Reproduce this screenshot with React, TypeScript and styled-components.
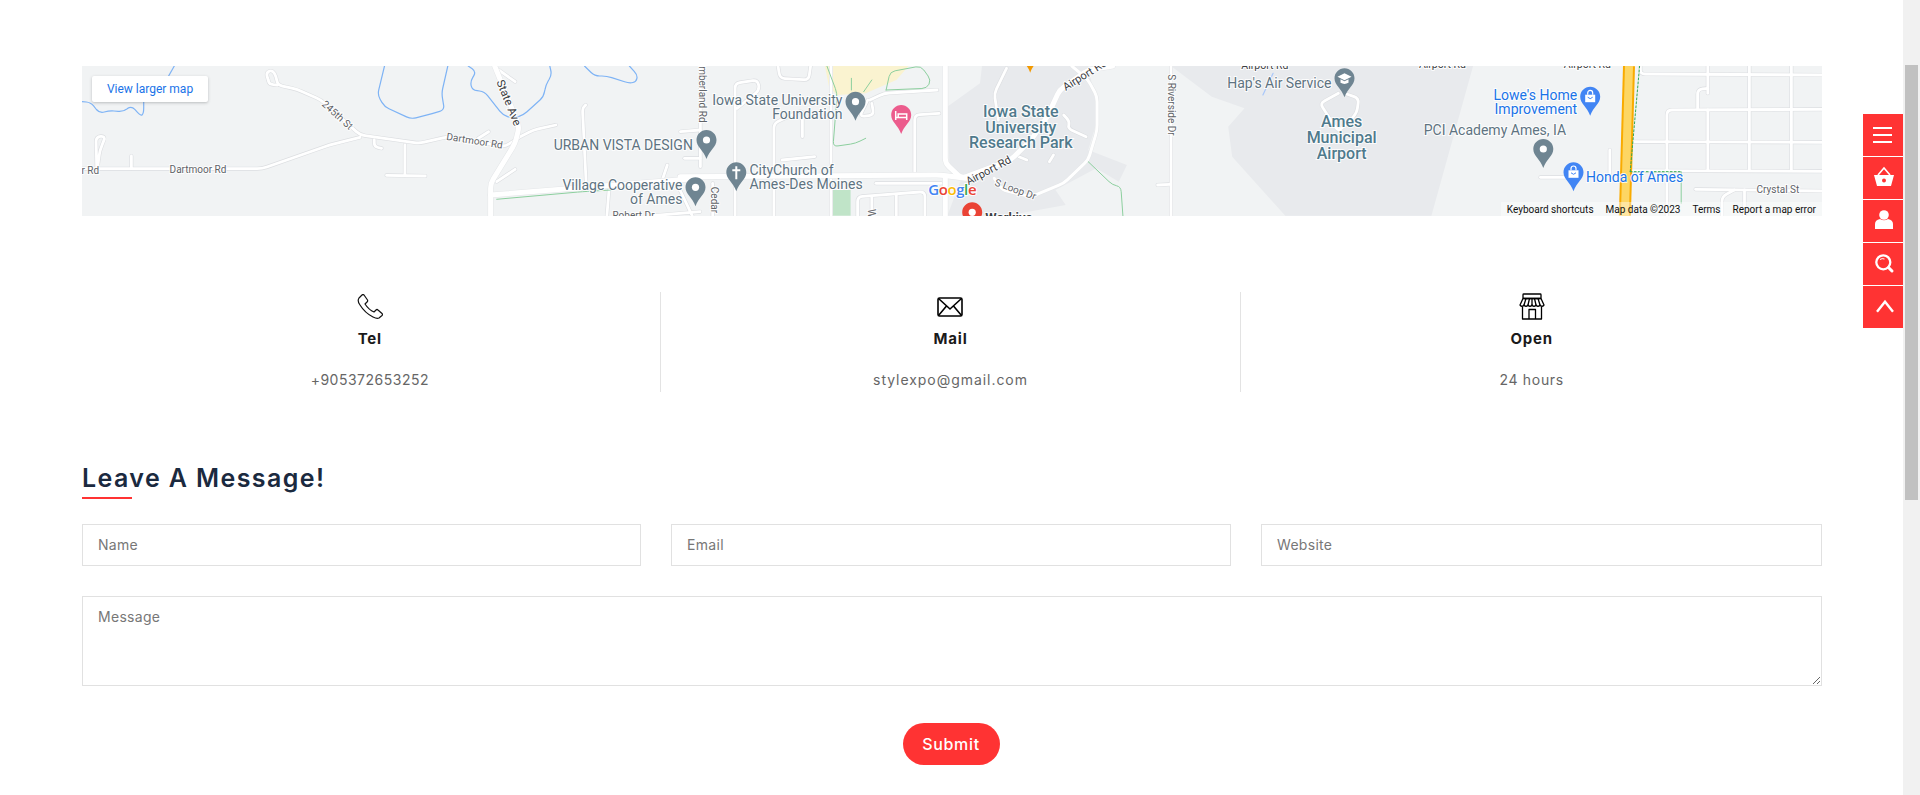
import React from "react";
import styled, { createGlobalStyle } from "styled-components";

const GlobalStyle = createGlobalStyle`
  html, body { margin: 0; padding: 0; height: 795px; overflow: hidden; background: #fff; }
  * { box-sizing: border-box; }
  body { font-family: Inter, "Liberation Sans", sans-serif; }
`;

const RED = "#ff3333";

const Shell = styled.div`
  position: relative;
  display: flex;
  width: 100%;
  height: 795px;
`;
const Page = styled.main`
  flex: 1;
  min-width: 0;
  padding: 66px 81px 0 82px;
`;
const ScrollTrack = styled.div`
  width: 17px;
  background: #f1f1f1;
  padding: 65px 2px 0;
`;
const ScrollThumb = styled.div`
  height: 435px;
  background: #c1c1c1;
`;

const SideMenu = styled.nav`
  position: absolute;
  top: 114px;
  right: 17px;
  display: flex;
  flex-direction: column;
  gap: 1px;
`;
const SideTile = styled.a`
  display: block;
  width: 40px;
  height: 42px;
  background: ${RED};
  svg { display: block; }
`;

const MapFrame = styled.section`
  position: relative;
  height: 150px;
  overflow: hidden;
  background: #f1f3f4;
  font-family: Roboto, sans-serif;
`;
const MapArt = styled.svg`
  display: block;
`;
const LargerMap = styled.a`
  position: absolute;
  top: 10px;
  left: 10px;
  width: 116px;
  height: 26px;
  display: flex;
  align-items: center;
  justify-content: center;
  background: #fff;
  border-radius: 2px;
  box-shadow: 0 1px 3px rgba(60, 64, 67, 0.3);
  color: #1a73e8;
  font-size: 12px;
`;
const Attribution = styled.div`
  position: absolute;
  right: 0;
  bottom: 0;
  display: flex;
  height: 14px;
  align-items: center;
  background: rgba(255, 255, 255, 0.4);
  color: #111;
  font-size: 10px;
  white-space: nowrap;
`;
const AttributionItem = styled.span`
  padding: 0 6px;
`;
const Tag = styled.text<{ $tone: string; $size: number; $weight: number }>`
  font-family: Roboto, sans-serif;
  font-size: ${(p) => p.$size}px;
  font-weight: ${(p) => p.$weight};
  fill: ${(p) => p.$tone};
  stroke: rgba(255, 255, 255, 0.85);
  stroke-width: 2px;
  paint-order: stroke;
  dominant-baseline: central;
`;
const GoogleMark = styled.text`
  font-family: "Open Sans", sans-serif;
  font-size: 15px;
  font-weight: 600;
  letter-spacing: -0.4px;
  stroke: rgba(255, 255, 255, 0.9);
  stroke-width: 2px;
  paint-order: stroke;
  dominant-baseline: central;
`;

const Contacts = styled.section`
  display: grid;
  grid-template-columns: repeat(3, 1fr);
  margin: 76px 0 0 -2px;
  height: 99px;
`;
const ContactItem = styled.div<{ $divider?: boolean }>`
  display: flex;
  flex-direction: column;
  align-items: center;
  border-right: ${(p) => (p.$divider ? "1px solid #e3e3e3" : "none")};
`;
const ContactIcon = styled.div`
  height: 29px;
  display: flex;
  align-items: center;
  justify-content: center;
  svg { display: block; }
`;
const ContactLabel = styled.h4`
  margin: 7px 0 0;
  font-size: 15px;
  line-height: 22px;
  font-weight: 700;
  color: #1a1a1a;
  letter-spacing: 0.8px;
`;
const ContactValue = styled.p<{ $spacing: number }>`
  margin: 18px 0 0;
  font-size: 14px;
  line-height: 24px;
  color: #666;
  letter-spacing: ${(p) => p.$spacing}px;
`;

const Heading = styled.h2`
  margin: 69px 0 0;
  font-size: 25px;
  line-height: 36px;
  font-weight: 600;
  color: #1b2a3f;
  letter-spacing: 1.4px;
`;
const HeadingBar = styled.div`
  width: 50px;
  height: 2px;
  margin-top: 1px;
  background: ${RED};
`;
const Form = styled.form`
  margin-top: 25px;
  display: flex;
  flex-direction: column;
  gap: 30px;
`;
const FieldRow = styled.div`
  display: grid;
  grid-template-columns: 559px 560px 1fr;
  gap: 30px;
`;
const Field = styled.input`
  height: 42px;
  width: 100%;
  padding: 0 15px 2px;
  border: 1px solid #e1e1e1;
  border-radius: 0;
  outline: none;
  background: #fff;
  font: 400 14px/20px Inter, sans-serif;
  letter-spacing: 0.3px;
  &::placeholder { color: #777; opacity: 1; }
`;
const MessageBox = styled.textarea`
  display: block;
  height: 90px;
  width: 100%;
  padding: 10px 15px;
  border: 1px solid #e1e1e1;
  border-radius: 0;
  outline: none;
  background: #fff;
  font: 400 14px/20px Inter, sans-serif;
  letter-spacing: 0.3px;
  &::placeholder { color: #777; opacity: 1; }
`;
const SubmitRow = styled.div`
  display: flex;
  justify-content: center;
  margin-top: 7px;
  padding-right: 2px;
`;
const Submit = styled.button`
  width: 97px;
  height: 42px;
  border: none;
  border-radius: 21px;
  background: ${RED};
  color: #fff;
  font: 500 16px/20px Inter, sans-serif;
  letter-spacing: 0.7px;
`;

/* ---------- map drawing: points are noted per strip of the sheet ---------- */
type Pt = [number, number];
const A = -22;
const B = 598;
const C = 1138;
const X = (off: number, zx: number) => off + zx / 2.45;
const Y = (zy: number) => zy / 3 - 16;

const curve = (off: number, pts: Pt[]) => {
  const p = pts.map(([x, y]) => [X(off, x), Y(y)]);
  const f = (n: number) => n.toFixed(1);
  let d = `M${f(p[0][0])} ${f(p[0][1])}`;
  for (let i = 1; i < p.length - 1; i++) {
    const [px, py] = p[i - 1];
    const [cx, cy] = p[i];
    const [nx, ny] = p[i + 1];
    const la = Math.hypot(cx - px, cy - py) || 1;
    const lb = Math.hypot(nx - cx, ny - cy) || 1;
    const ra = Math.min(5, la / 2);
    const rb = Math.min(5, lb / 2);
    d += ` L${f(cx - ((cx - px) / la) * ra)} ${f(cy - ((cy - py) / la) * ra)}`;
    d += ` Q${f(cx)} ${f(cy)} ${f(cx + ((nx - cx) / lb) * rb)} ${f(cy + ((ny - cy) / lb) * rb)}`;
  }
  const l = p[p.length - 1];
  return d + ` L${f(l[0])} ${f(l[1])}`;
};
const poly = (off: number, pts: Pt[]) =>
  pts.map(([x, y]) => `${X(off, x).toFixed(1)},${Y(y).toFixed(1)}`).join(" ");

const minorRoads: [number, Pt[]][] = [
  [A, [[510, 90], [505, 68], [520, 60], [530, 80], [533, 105], [580, 118], [640, 150], [735, 255], [880, 280], [950, 260], [1090, 290], [1125, 262]]],
  [A, [[533, 105], [513, 103], [510, 90]]],
  [A, [[54, 356], [495, 356], [660, 285], [735, 262]]],
  [A, [[845, 285], [845, 376]]],
  [A, [[800, 376], [895, 378]]],
  [A, [[175, 318], [175, 355]]],
  [A, [[90, 350], [88, 260], [112, 258], [98, 300], [92, 350]]],
  [A, [[1125, 262], [1160, 240], [1215, 225]]],
  [A, [[1115, 358], [1070, 395]]],
  [A, [[1075, 60], [1115, 95]]],
  [A, [[1050, 245], [1025, 265]]],
  [A, [[770, 270], [770, 290], [788, 295]]],
  [A, [[1288, 165], [1280, 175], [1290, 420]]],
  [A, [[1488, 345], [1470, 410]]],
  [A, [[1345, 420], [1340, 497]]],
  [A, [[1520, 245], [1568, 240]]],
  [A, [[1530, 325], [1568, 325]]],
  [A, [[1450, 497], [1568, 485]]],
  [B, [[135, 497], [135, 100], [190, 90], [195, 120], [140, 175]]],
  [B, [[230, 497], [230, 220], [300, 180], [300, 260]]],
  [B, [[240, 48], [245, 85], [315, 90], [320, 48]]],
  [B, [[575, 365], [575, 195], [635, 190]]],
  [B, [[370, 497], [370, 48]]],
  [B, [[465, 150], [500, 130], [630, 120]]],
  [B, [[460, 150], [440, 200], [475, 195], [470, 160]]],
  [B, [[435, 497], [435, 440], [600, 425], [600, 497]]],
  [B, [[470, 440], [470, 497]]],
  [B, [[530, 435], [530, 497]]],
  [B, [[480, 400], [640, 400]]],
  [B, [[50, 48], [50, 350]]],
  [B, [[0, 420], [30, 497]]],
  [B, [[250, 330], [330, 320]]],
  [B, [[80, 400], [80, 497]]],
  [B, [[1203, 48], [1203, 497]]],
  [B, [[1170, 405], [1200, 403]]],
  [B, [[800, 55], [770, 130], [780, 210]]],
  [B, [[940, 195], [955, 215], [950, 235], [995, 260]]],
  [B, [[905, 335], [915, 315]]],
  [B, [[830, 320], [850, 330]]],
  [C, [[290, 130], [245, 160], [290, 245], [335, 190], [340, 145], [305, 130]]],
  [C, [[1030, 48], [1030, 72], [1475, 75]]],
  [C, [[1095, 360], [1095, 180], [1475, 178]]],
  [C, [[1195, 48], [1195, 130]]],
  [C, [[1195, 180], [1195, 360]]],
  [C, [[1297, 48], [1297, 360]]],
  [C, [[1400, 48], [1400, 360]]],
  [C, [[1015, 275], [1475, 277]]],
  [C, [[1005, 362], [1475, 364]]],
  [C, [[1170, 175], [1170, 118], [1195, 115]]],
  [C, [[1165, 418], [1475, 423]]],
  [C, [[1230, 497], [1230, 440], [1260, 420]]],
  [C, [[1285, 497], [1285, 420]]],
  [C, [[1095, 360], [1095, 497]]],
  [C, [[785, 382], [860, 382]]],
  [C, [[955, 300], [955, 375]]],
];
const majorRoads: [number, Pt[]][] = [
  [A, [[1065, 48], [1125, 230], [1115, 280], [1055, 400], [1055, 497]]],
  [A, [[1055, 435], [1568, 385]]],
  [B, [[0, 380], [640, 375], [700, 385]]],
  [B, [[650, 48], [650, 340], [690, 385], [810, 330], [860, 270], [900, 200], [930, 120], [1000, 60], [1060, 48]]],
  [B, [[650, 380], [650, 497]]],
  [B, [[960, 48], [1000, 90], [1022, 140], [1022, 240], [1000, 330], [940, 400], [860, 440], [790, 420], [770, 385]]],
];
const rivers: [number, Pt[]][] = [
  [A, [[280, 48], [265, 80]]],
  [A, [[54, 155], [75, 157], [97, 190], [120, 182], [155, 185], [175, 167], [198, 198], [205, 190], [205, 150]]],
  [A, [[795, 48], [778, 135], [795, 170], [860, 207], [900, 195], [942, 180], [935, 130], [950, 48]]],
  [A, [[1000, 48], [1020, 65], [1005, 95], [1010, 120], [1040, 125], [1085, 195], [1110, 205], [1135, 195], [1185, 140], [1190, 105], [1205, 75], [1200, 48]]],
  [A, [[1285, 48], [1310, 78], [1340, 78], [1395, 100], [1412, 95], [1415, 75], [1395, 48]]],
];
const greens: [number, Pt[]][] = [
  [A, [[1070, 448], [1280, 425], [1350, 420]]],
  [B, [[360, 48], [385, 130], [375, 290], [430, 280], [455, 265]]],
  [B, [[420, 85], [420, 120]]],
  [B, [[470, 90], [450, 125]]],
  [B, [[505, 120], [515, 65], [590, 48], [615, 90], [605, 115], [505, 120]]],
  [B, [[1000, 335], [1060, 405], [1080, 410], [1085, 497]]],
];

type Glyph = "dot" | "cross" | "bed" | "bag" | "cap";
const Pin = ({ off, zx, top, color, glyph }: { off: number; zx: number; top: number; color: string; glyph: Glyph }) => (
  <g transform={`translate(${(X(off, zx) - 10).toFixed(1)} ${Y(top).toFixed(1)})`}>
    <path fill={color} d="M10 0C4.5 0 0 4.4 0 10c0 7 7 10 10 19c3-9 10-12 10-19C20 4.4 15.5 0 10 0Z" />
    {glyph === "dot" && <circle cx="10" cy="10" r="3.6" fill="#fff" />}
    {glyph === "cross" && <path d="M10 4v13M6 8h8" stroke="#fff" strokeWidth="2" fill="none" />}
    {glyph === "bed" && <path d="M4.5 6v9M4.5 12.5h11v2.5M7 9h8.5v3.5H7z" stroke="#fff" strokeWidth="1.5" fill="none" />}
    {glyph === "bag" && (
      <>
        <path d="M5 8h10v7.5H5z" fill="#fff" />
        <path d="M7.5 8V6.2a2.5 2.5 0 0 1 5 0V8" stroke="#fff" strokeWidth="1.2" fill="none" />
        <path d="M7.5 10.5q2.5 3 5 0" stroke={color} strokeWidth="1" fill="none" />
      </>
    )}
    {glyph === "cap" && (
      <>
        <path d="M10 5l7 3.5-7 3.5-7-3.5z" fill="#fff" />
        <path d="M6 11v3.5q4 2.2 8 0V11l-4 2z" fill="#fff" />
      </>
    )}
  </g>
);

const GREY = "#6f8592";
const POI = "#5e7381";
const AREA = "#4f7a8c";
const ROAD = "#5f6368";
const DARK = "#3c4043";
const BLUE = "#1a73e8";

type LabelDef = [number, number, number, string, number, string, number, "start" | "middle" | "end", number];
const labels: LabelDef[] = [
  [A, 74, 360, "r Rd", 10, ROAD, 400, "middle", 0],
  [A, 338, 358, "Dartmoor Rd", 10, ROAD, 400, "middle", 0],
  [A, 680, 195, "245th St", 10, ROAD, 400, "middle", 42],
  [A, 1016, 272, "Dartmoor Rd", 10, ROAD, 400, "middle", 9],
  [A, 1100, 158, "State Ave", 11.5, DARK, 400, "middle", 68],
  [A, 1380, 285, "URBAN VISTA DESIGN", 14, POI, 400, "middle", 0],
  [A, 1525, 405, "Village Cooperative", 14, POI, 400, "end", 0],
  [A, 1525, 447, "of Ames", 14, POI, 400, "end", 0],
  [A, 1405, 497, "Robert Dr", 10, ROAD, 400, "middle", 0],
  [B, 398, 150, "Iowa State University", 14, POI, 400, "end", 0],
  [B, 398, 192, "Foundation", 14, POI, 400, "end", 0],
  [B, 55, 115, "Cumberland Rd", 10, ROAD, 400, "middle", 90],
  [B, 170, 360, "CityChurch of", 14, POI, 400, "start", 0],
  [B, 170, 403, "Ames-Des Moines", 14, POI, 400, "start", 0],
  [B, 85, 450, "Cedar", 10, ROAD, 400, "middle", 90],
  [B, 470, 490, "W", 10, ROAD, 400, "middle", 90],
  [B, 835, 183, "Iowa State", 16, AREA, 500, "middle", 0],
  [B, 835, 231, "University", 16, AREA, 500, "middle", 0],
  [B, 835, 278, "Research Park", 16, AREA, 500, "middle", 0],
  [B, 756, 362, "Airport Rd", 11, DARK, 400, "middle", -28],
  [B, 992, 75, "Airport Rd", 11, DARK, 400, "middle", -32],
  [B, 822, 418, "S Loop Dr", 10, ROAD, 400, "middle", 20],
  [B, 1203, 165, "S Riverside Dr", 10, ROAD, 400, "middle", 90],
  [B, 748, 501, "Workiva", 13, DARK, 700, "start", 0],
  [C, 110, 45, "Airport Rd", 10.5, DARK, 400, "middle", 0],
  [C, 545, 42, "Airport Rd", 10.5, DARK, 400, "middle", 0],
  [C, 900, 42, "Airport Rd", 10.5, DARK, 400, "middle", 0],
  [C, 273, 100, "Hap's Air Service", 14, POI, 400, "end", 0],
  [C, 298, 213, "Ames", 16, AREA, 500, "middle", 0],
  [C, 298, 262, "Municipal", 16, AREA, 500, "middle", 0],
  [C, 298, 310, "Airport", 16, AREA, 500, "middle", 0],
  [C, 875, 135, "Lowe's Home", 14, BLUE, 400, "end", 0],
  [C, 875, 178, "Improvement", 14, BLUE, 400, "end", 0],
  [C, 848, 240, "PCI Academy Ames, IA", 14, POI, 400, "end", 0],
  [C, 897, 382, "Honda of Ames", 14, BLUE, 400, "start", 0],
  [C, 1367, 418, "Crystal St", 10, ROAD, 400, "middle", 0],
];

const MapDrawing = () => (
  <MapArt width="1740" height="150" viewBox="0 0 1740 150">
    <polygon
      fill="#e8eaed"
      points={poly(B, [[740, 48], [1000, 48], [1025, 200], [1000, 300], [1095, 345], [1075, 395], [1020, 355], [920, 420], [945, 465], [800, 497], [655, 497], [690, 385], [660, 340], [655, 170], [735, 100]])}
    />
    <polygon
      fill="#e8eaed"
      points={poly(C, [[-120, 48], [620, 48], [518, 497], [160, 497], [30, 320], [20, 230], [60, 175], [-20, 140]])}
    />
    <polygon fill="#faf3d0" points={poly(B, [[355, 48], [560, 48], [530, 90], [455, 130], [385, 135], [365, 110]])} />
    <polygon fill="#c0e4c8" points={poly(B, [[372, 420], [418, 420], [418, 497], [372, 497]])} />
    <g fill="none" strokeLinecap="round" strokeLinejoin="round">
      {minorRoads.map(([o, p], i) => <path key={i} d={curve(o, p)} stroke="#dcdee1" strokeWidth="4" />)}
      {minorRoads.map(([o, p], i) => <path key={i} d={curve(o, p)} stroke="#fff" strokeWidth="2.8" />)}
      {majorRoads.map(([o, p], i) => <path key={i} d={curve(o, p)} stroke="#e4e6e8" strokeWidth={i === 5 ? 4 : 6} />)}
      {majorRoads.map(([o, p], i) => <path key={i} d={curve(o, p)} stroke="#fff" strokeWidth={i === 5 ? 3 : 5} />)}
      <path d={curve(C, [[1002, 48], [992, 497]])} stroke="#f9ab00" strokeWidth="12" strokeLinecap="butt" />
      <path d={curve(C, [[1002, 48], [992, 497]])} stroke="#fdd663" strokeWidth="8" strokeLinecap="butt" />
      {rivers.map(([o, p], i) => <path key={i} d={curve(o, p)} stroke="#7eb3f5" strokeWidth="1.2" />)}
      <path d={curve(C, [[130, 70], [105, 135]])} stroke="#a8c7fa" strokeWidth="1.2" />
      {greens.map(([o, p], i) => <path key={i} d={curve(o, p)} stroke="#8ccf9e" strokeWidth="1" />)}
      <path d={curve(C, [[1028, 48], [1005, 365]])} stroke="#34a853" strokeWidth="1" strokeDasharray="2 2" />
      <path d={curve(C, [[1005, 365], [1130, 365]])} stroke="#34a853" strokeWidth="1" strokeDasharray="2 2" />
      <path d={curve(C, [[1130, 365], [1130, 460]])} stroke="#8ccf9e" strokeWidth="1" />
    </g>
    {labels.map(([o, zx, zy, text, size, tone, weight, anchor, rot], i) => {
      const x = X(o, zx);
      const y = Y(zy);
      return (
        <Tag
          key={i}
          x={x}
          y={y}
          $size={size}
          $tone={tone}
          $weight={weight}
          textAnchor={anchor}
          transform={rot ? `rotate(${rot} ${x} ${y})` : undefined}
        >
          {text}
        </Tag>
      );
    })}
    <Pin off={B} zx={430} top={125} color={GREY} glyph="dot" />
    <Pin off={B} zx={542} top={165} color="#ec5c8d" glyph="bed" />
    <Pin off={B} zx={65} top={240} color={GREY} glyph="dot" />
    <Pin off={B} zx={138} top={337} color={GREY} glyph="cross" />
    <Pin off={B} zx={38} top={382} color={GREY} glyph="dot" />
    <Pin off={B} zx={716} top={457} color="#ea4335" glyph="dot" />
    <Pin off={B} zx={858} top={-19} color="#f29900" glyph="dot" />
    <Pin off={C} zx={305} top={55} color={GREY} glyph="cap" />
    <Pin off={C} zx={907} top={110} color="#4285f4" glyph="bag" />
    <Pin off={C} zx={792} top={267} color={GREY} glyph="dot" />
    <Pin off={C} zx={866} top={337} color="#4285f4" glyph="bag" />
    <GoogleMark x={X(B, 608)} y={Y(418)}>
      <tspan fill="#4285f4">G</tspan>
      <tspan fill="#ea4335">o</tspan>
      <tspan fill="#fbbc05">o</tspan>
      <tspan fill="#4285f4">g</tspan>
      <tspan fill="#34a853">l</tspan>
      <tspan fill="#ea4335">e</tspan>
    </GoogleMark>
  </MapArt>
);

/* ---------- icons ---------- */
const PhoneIcon = () => (
  <svg width="26" height="25" viewBox="0 0 26 25" fill="none" stroke="#111" strokeWidth="1.2" strokeLinejoin="round">
    <path d="M2 4L5 1q1-1 2 0l3.5 5q.5 1-.5 2L8 10q4 6 9 8l2-2q1-1 2 0l4 3.5q1 1 0 2L22 24q-2 1-6-1Q8 19 3 11 0 7 2 4Z" />
  </svg>
);
const MailIcon = () => (
  <svg width="26" height="20" viewBox="0 0 26 20" fill="none" stroke="#000" strokeWidth="1.6" strokeLinejoin="round">
    <rect x="1" y="1" width="24" height="18" rx="1.5" />
    <path d="M1.5 1.5L13 12 24.5 1.5M1.5 18.5L9.5 9M24.5 18.5L16.5 9" />
  </svg>
);
const ShopIcon = () => (
  <svg width="26" height="27" viewBox="0 0 26 27" fill="none" stroke="#000" strokeWidth="1.3" strokeLinejoin="round">
    <rect x="4" y="1" width="18" height="4.5" rx=".8" />
    <path d="M4 5.5L1 12q2 2.6 4 0 2 2.6 4 0 2 2.6 4 0 2 2.6 4 0 2 2.6 4 0 2 2.6 4 0L22 5.5Z" />
    <path d="M5 12l2-6.5M9 12l1.5-6.5M13 12V5.5M17 12l-1.5-6.5M21 12l-2-6.5" />
    <path d="M3.5 14v12h19V14M10 26V16.5h6.500V26" />
  </svg>
);

const MenuGlyph = () => (
  <svg width="40" height="42" viewBox="0 0 40 42" fill="#fff">
    <rect x="10" y="13" width="19" height="2" />
    <rect x="10" y="20" width="19" height="2" />
    <rect x="10" y="27" width="19" height="2" />
  </svg>
);
const BasketGlyph = () => (
  <svg width="40" height="42" viewBox="0 0 40 42">
    <path d="M15 18l6-7 6 7" fill="none" stroke="#fff" strokeWidth="1.6" />
    <path d="M11 18h20l-3 11H14z" fill="#fff" />
    <circle cx="21" cy="23.500" r="2" fill={RED} />
  </svg>
);
const PersonGlyph = () => (
  <svg width="40" height="42" viewBox="0 0 40 42" fill="#fff">
    <circle cx="21" cy="15" r="4.800" />
    <path d="M12 29v-5q0-4 5-5 4 2.500 8 0 5 1 5 5v5z" />
  </svg>
);
const SearchGlyph = () => (
  <svg width="40" height="42" viewBox="0 0 40 42" fill="none" stroke="#fff">
    <circle cx="20.300" cy="19.300" r="7" strokeWidth="2.300" />
    <path d="M25.500 24.500L29 28" strokeWidth="3" strokeLinecap="round" />
    <path d="M17 16.500q2-1.500 4.500-.5" strokeWidth="1" />
  </svg>
);
const ChevronGlyph = () => (
  <svg width="40" height="42" viewBox="0 0 40 42" fill="none" stroke="#fff" strokeWidth="2.400">
    <path d="M14 25.700L22 15.700l8 10" />
  </svg>
);

const contacts = [
  { icon: <PhoneIcon />, label: "Tel", value: "+905372653252", spacing: 0.5 },
  { icon: <MailIcon />, label: "Mail", value: "stylexpo@gmail.com", spacing: 0.95 },
  { icon: <ShopIcon />, label: "Open", value: "24 hours", spacing: 0.7 },
];

export default function App() {
  return (
    <Shell>
      <GlobalStyle />
      <Page>
        <MapFrame>
          <MapDrawing />
          <LargerMap>View larger map</LargerMap>
          <Attribution>
            <AttributionItem>Keyboard shortcuts</AttributionItem>
            <AttributionItem>Map data ©2023</AttributionItem>
            <AttributionItem>Terms</AttributionItem>
            <AttributionItem>Report a map error</AttributionItem>
          </Attribution>
        </MapFrame>
        <Contacts>
          {contacts.map((c, i) => (
            <ContactItem key={c.label} $divider={i < 2}>
              <ContactIcon>{c.icon}</ContactIcon>
              <ContactLabel>{c.label}</ContactLabel>
              <ContactValue $spacing={c.spacing}>{c.value}</ContactValue>
            </ContactItem>
          ))}
        </Contacts>
        <Heading>Leave A Message!</Heading>
        <HeadingBar />
        <Form>
          <FieldRow>
            <Field placeholder="Name" />
            <Field placeholder="Email" />
            <Field placeholder="Website" />
          </FieldRow>
          <MessageBox placeholder="Message" />
          <SubmitRow>
            <Submit type="button">Submit</Submit>
          </SubmitRow>
        </Form>
      </Page>
      <ScrollTrack>
        <ScrollThumb />
      </ScrollTrack>
      <SideMenu>
        <SideTile><MenuGlyph /></SideTile>
        <SideTile><BasketGlyph /></SideTile>
        <SideTile><PersonGlyph /></SideTile>
        <SideTile><SearchGlyph /></SideTile>
        <SideTile><ChevronGlyph /></SideTile>
      </SideMenu>
    </Shell>
  );
}
